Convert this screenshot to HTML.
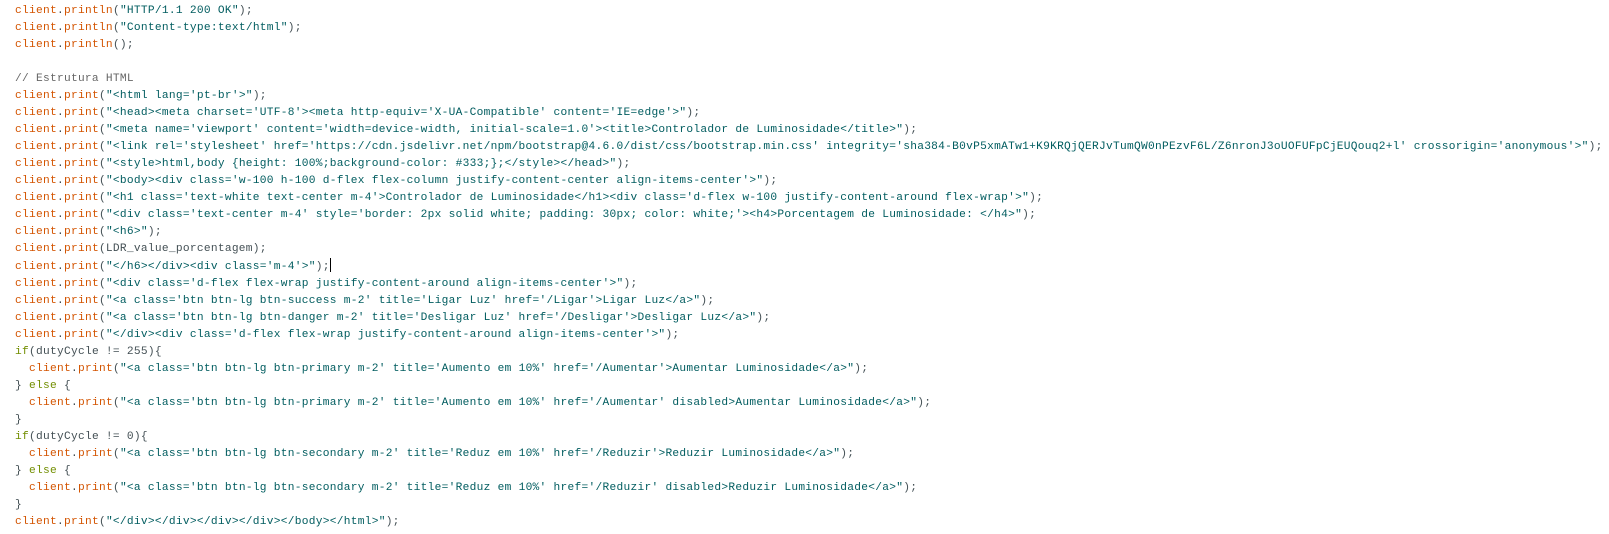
<!DOCTYPE html>
<html><head><meta charset="utf-8"><style>
html,body{margin:0;padding:0;background:#fff;width:1609px;height:534px;overflow:hidden}
pre{margin:0;position:absolute;left:15px;top:3px;font-family:"Liberation Mono",monospace;font-size:11.2px;letter-spacing:0.28px;line-height:17px;color:#434f54;white-space:pre}
.k{color:#d35400}.s{color:#005c5f}.c{color:#666}.i{color:#728e00}
.cur{display:inline-block;width:1px;height:14px;background:#000;vertical-align:-3px}
</style></head><body><pre><span class="k">client</span>.<span class="k">println</span>(<span class="s">"HTTP/1.1 200 OK"</span>);
<span class="k">client</span>.<span class="k">println</span>(<span class="s">"Content-type:text/html"</span>);
<span class="k">client</span>.<span class="k">println</span>();

<span class="c">// Estrutura HTML</span>
<span class="k">client</span>.<span class="k">print</span>(<span class="s">"&lt;html lang='pt-br'&gt;"</span>);
<span class="k">client</span>.<span class="k">print</span>(<span class="s">"&lt;head&gt;&lt;meta charset='UTF-8'&gt;&lt;meta http-equiv='X-UA-Compatible' content='IE=edge'&gt;"</span>);
<span class="k">client</span>.<span class="k">print</span>(<span class="s">"&lt;meta name='viewport' content='width=device-width, initial-scale=1.0'&gt;&lt;title&gt;Controlador de Luminosidade&lt;/title&gt;"</span>);
<span class="k">client</span>.<span class="k">print</span>(<span class="s">"&lt;link rel='stylesheet' href='https://cdn.jsdelivr.net/npm/bootstrap@4.6.0/dist/css/bootstrap.min.css' integrity='sha384-B0vP5xmATw1+K9KRQjQERJvTumQW0nPEzvF6L/Z6nronJ3oUOFUFpCjEUQouq2+l' crossorigin='anonymous'&gt;"</span>);
<span class="k">client</span>.<span class="k">print</span>(<span class="s">"&lt;style&gt;html,body {height: 100%;background-color: #333;};&lt;/style&gt;&lt;/head&gt;"</span>);
<span class="k">client</span>.<span class="k">print</span>(<span class="s">"&lt;body&gt;&lt;div class='w-100 h-100 d-flex flex-column justify-content-center align-items-center'&gt;"</span>);
<span class="k">client</span>.<span class="k">print</span>(<span class="s">"&lt;h1 class='text-white text-center m-4'&gt;Controlador de Luminosidade&lt;/h1&gt;&lt;div class='d-flex w-100 justify-content-around flex-wrap'&gt;"</span>);
<span class="k">client</span>.<span class="k">print</span>(<span class="s">"&lt;div class='text-center m-4' style='border: 2px solid white; padding: 30px; color: white;'&gt;&lt;h4&gt;Porcentagem de Luminosidade: &lt;/h4&gt;"</span>);
<span class="k">client</span>.<span class="k">print</span>(<span class="s">"&lt;h6&gt;"</span>);
<span class="k">client</span>.<span class="k">print</span>(LDR_value_porcentagem);
<span class="k">client</span>.<span class="k">print</span>(<span class="s">"&lt;/h6&gt;&lt;/div&gt;&lt;div class='m-4'&gt;"</span>);<span class="cur"></span>
<span class="k">client</span>.<span class="k">print</span>(<span class="s">"&lt;div class='d-flex flex-wrap justify-content-around align-items-center'&gt;"</span>);
<span class="k">client</span>.<span class="k">print</span>(<span class="s">"&lt;a class='btn btn-lg btn-success m-2' title='Ligar Luz' href='/Ligar'&gt;Ligar Luz&lt;/a&gt;"</span>);
<span class="k">client</span>.<span class="k">print</span>(<span class="s">"&lt;a class='btn btn-lg btn-danger m-2' title='Desligar Luz' href='/Desligar'&gt;Desligar Luz&lt;/a&gt;"</span>);
<span class="k">client</span>.<span class="k">print</span>(<span class="s">"&lt;/div&gt;&lt;div class='d-flex flex-wrap justify-content-around align-items-center'&gt;"</span>);
<span class="i">if</span>(dutyCycle != 255){
  <span class="k">client</span>.<span class="k">print</span>(<span class="s">"&lt;a class='btn btn-lg btn-primary m-2' title='Aumento em 10%' href='/Aumentar'&gt;Aumentar Luminosidade&lt;/a&gt;"</span>);
} <span class="i">else</span> {
  <span class="k">client</span>.<span class="k">print</span>(<span class="s">"&lt;a class='btn btn-lg btn-primary m-2' title='Aumento em 10%' href='/Aumentar' disabled&gt;Aumentar Luminosidade&lt;/a&gt;"</span>);
}
<span class="i">if</span>(dutyCycle != 0){
  <span class="k">client</span>.<span class="k">print</span>(<span class="s">"&lt;a class='btn btn-lg btn-secondary m-2' title='Reduz em 10%' href='/Reduzir'&gt;Reduzir Luminosidade&lt;/a&gt;"</span>);
} <span class="i">else</span> {
  <span class="k">client</span>.<span class="k">print</span>(<span class="s">"&lt;a class='btn btn-lg btn-secondary m-2' title='Reduz em 10%' href='/Reduzir' disabled&gt;Reduzir Luminosidade&lt;/a&gt;"</span>);
}
<span class="k">client</span>.<span class="k">print</span>(<span class="s">"&lt;/div&gt;&lt;/div&gt;&lt;/div&gt;&lt;/div&gt;&lt;/body&gt;&lt;/html&gt;"</span>);</pre></body></html>
